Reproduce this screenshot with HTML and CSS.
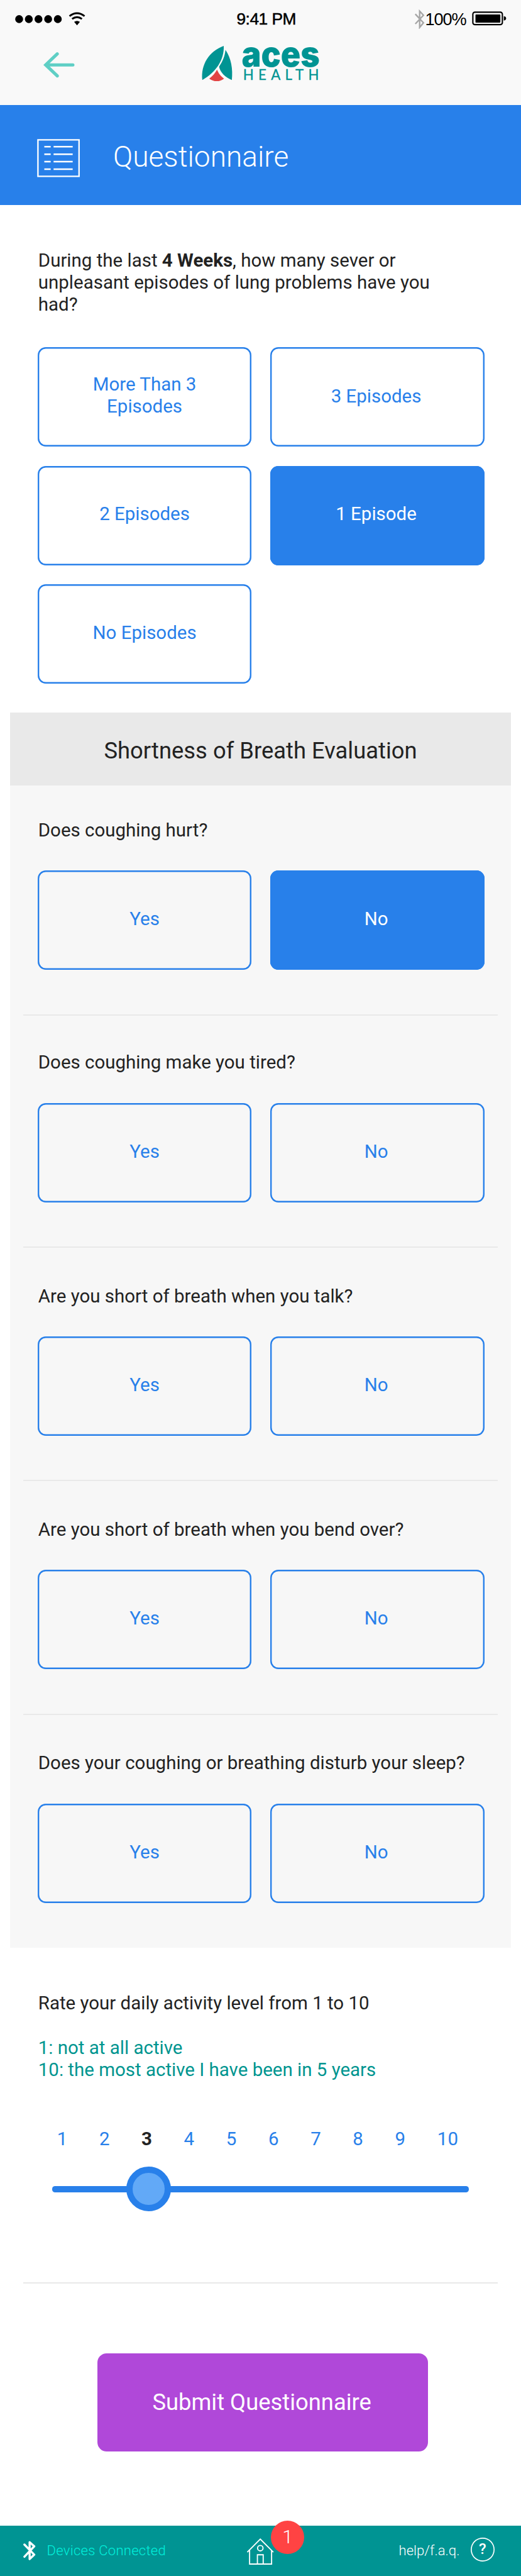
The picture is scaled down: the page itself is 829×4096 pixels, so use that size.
FILE: index.html
```html
<!DOCTYPE html>
<html lang="en">
<head>
<meta charset="utf-8">
<title>Questionnaire</title>
<link rel="stylesheet" href="styles.css">
</head>
<body>
<div class="page">
  <header class="top">
    <div class="status">
      <svg class="signal" viewBox="26 16 124 34"><g><circle cx="33" cy="32.7" r="6.8"/><circle cx="49.7" cy="32.7" r="6.8"/><circle cx="66.4" cy="32.7" r="6.8"/><circle cx="83.1" cy="32.7" r="6.8"/><circle cx="99.8" cy="32.7" r="6.8"/></g><g fill="none" stroke="#000" stroke-width="3.2"><path d="M120 27.5Q133 17.500 146 27.500"/><path d="M124.500 32.500Q133 26 141.500 32.500"/></g><path d="M128 37.500Q133 34 138 37.500L133 43.500Z"/></svg>
      <span class="time">9:41 PM</span>
      <div class="power">
        <svg class="bt-gray" viewBox="0 0 19 34"><path d="M2 8L16 23 9.500 31V3L16 10 2 25" fill="none" stroke="#a6a6a6" stroke-width="2.600"/></svg>
        <span class="percent">100%</span>
        <svg class="battery" viewBox="0 0 60 25"><rect x="1.500" y="1.500" width="51" height="21.500" rx="3.500" fill="none" stroke="#000" stroke-width="2.300"/><rect x="6" y="5.500" width="43" height="14" rx="1"/><path d="M55 8.500Q59 9 59 12.300T55 16Z"/></svg>
      </div>
    </div>
    <div class="brand">
      <svg class="back" viewBox="0 0 56 46"><path d="M51 23H5M24 4L4 23 24 42" fill="none" stroke="#5fcfc5" stroke-width="5.500" stroke-linecap="round" stroke-linejoin="miter"/></svg>
      <svg class="logo" viewBox="348 78 206 64"><path fill="#009493" d="M386 79C361 88 346 111 349 138C373 124 387 103 386 79ZM389 86C399 101 402 119 400 138C389 134 380 125 378 115C384 106 388 97 389 86Z"/><path fill="#e24444" d="M374.500 120C377 127 381 131 386.500 135.500C380 141.500 368 141.500 361 135.500C367 131 371 126 374.500 120Z"/><text class="logo-name" x="417" y="114.500" textLength="135" lengthAdjust="spacingAndGlyphs">aces</text><text class="logo-sub" x="419.500" y="137.500" textLength="131">HEALTH</text></svg>
    </div>
  </header>
  <div class="title-bar">
    <svg class="list-icon" viewBox="0 0 74 66"><g fill="none" stroke="#fff"><path stroke-width="2.500" d="M1.500 1.500H72.500V64.500H1.500Z"/><path stroke-width="2.700" d="M12.500 13.200H23.500M28.500 13.200H61.500M12.500 26.200H23.500M28.500 26.200H61.500M12.500 39.200H23.500M28.500 39.200H61.500M12.500 52.200H23.500M28.500 52.200H61.500"/></g></svg>
    <h1>Questionnaire</h1>
  </div>
  <main>
    <section class="episodes">
      <p class="question">During the last <b>4 Weeks</b>, how many sever or<br>unpleasant episodes of lung problems have you<br>had?</p>
      <div class="options">
        <button class="option">More Than 3<br>Episodes</button><button class="option low">3 Episodes</button>
        <button class="option">2 Episodes</button><button class="option on">1 Episode</button>
        <button class="option">No Episodes</button>
      </div>
    </section>
    <section class="breath">
      <h2>Shortness of Breath Evaluation</h2>
      <div class="item first"><p class="question">Does coughing hurt?</p><div class="options"><button class="option">Yes</button><button class="option on">No</button></div></div>
      <div class="item second"><p class="question">Does coughing make you tired?</p><div class="options"><button class="option">Yes</button><button class="option">No</button></div></div>
      <div class="item"><p class="question">Are you short of breath when you talk?</p><div class="options"><button class="option">Yes</button><button class="option">No</button></div></div>
      <div class="item"><p class="question">Are you short of breath when you bend over?</p><div class="options"><button class="option">Yes</button><button class="option">No</button></div></div>
      <div class="item"><p class="question">Does your coughing or breathing disturb your sleep?</p><div class="options"><button class="option">Yes</button><button class="option">No</button></div></div>
    </section>
    <section class="activity">
      <p class="question">Rate your daily activity level from 1 to 10</p>
      <p class="question legend">1: not at all active<br>10: the most active I have been in 5 years</p>
      <div class="scale"><span>1</span><span>2</span><b>3</b><span>4</span><span>5</span><span>6</span><span>7</span><span>8</span><span>9</span><span class="ten">10</span></div>
      <div class="slider"><div class="track"></div><div class="knob"></div></div>
    </section>
    <div class="submit-row"><button class="submit">Submit Questionnaire</button></div>
  </main>
  <footer class="bottom">
    <div class="devices">
      <svg class="bt" viewBox="0 0 22 34"><path d="M2 6.500L19 24 11 31.500V2.500L19 9.500 2 27.500" fill="none" stroke="#fff" stroke-width="3.700" stroke-linecap="round" stroke-linejoin="round"/></svg>
      <span>Devices Connected</span>
    </div>
    <div class="home">
      <svg class="house" viewBox="0 0 46 46"><g fill="none" stroke="#fff" stroke-width="2"><path d="M0.500 24L23 1.500 45.500 24M4.500 20.500V44.500H42.500V20.500M18 44.500V28.500H28V44.500"/><circle cx="23" cy="17" r="4.700"/></g></svg>
      <span class="badge">1</span>
    </div>
    <div class="help"><span>help/f.a.q.</span><span class="mark">?</span></div>
  </footer>
</div>
</body>
</html>
```
FILE: styles.css
```css
/* 1rem is ten design pixels at the page's display scale */
html { font-size: 9.2122px; }
* { box-sizing: border-box; }
body { margin: 0; background: #fff; color: #222; font-family: Roboto, sans-serif; }
h1, h2, p { margin: 0; font-weight: 400; }
button { font: inherit; border: 0; padding: 0; background: none; }
svg { display: block; flex: none; }
.page { width: 90rem; height: 444.6rem; overflow: hidden; display: flex; flex-direction: column; }

.top { height: 18.1rem; background: #f9f9f9; }
.status { height: 6.6rem; padding: 1.6rem 2.5rem 0 2.6rem; display: grid; grid-template-columns: 1fr auto 1fr; align-items: start; }
.signal { width: 12.4rem; height: 3.4rem; }
.time, .percent { font-family: "Liberation Sans", sans-serif; font-size: 2.95rem; line-height: 3.4rem; color: #000; white-space: nowrap; }
.time { font-size: 2.85rem; letter-spacing: -0.05rem; padding-left: 1.9rem; -webkit-text-stroke: 0.06rem #000; }
.power { display: flex; justify-content: flex-end; }
.bt-gray { width: 1.9rem; height: 3.4rem; }
.percent { letter-spacing: -0.12rem; }
.battery { width: 6rem; height: 2.5rem; margin: 0.4rem 0 0 1rem; }
.brand { display: flex; padding: 1.2rem 0 0 7.5rem; }
.back { width: 5.6rem; height: 4.6rem; margin: 1.1rem 21.7rem 0 0; }
.logo { width: 20.6rem; height: 6.4rem; overflow: visible; }
.logo-name { font: 900 60px Inter, sans-serif; fill: #009493; }
.logo-sub { font: 400 24.200px Lato, sans-serif; fill: #009493; stroke: #009493; stroke-width: 0.3px; }

.title-bar { height: 17.3rem; background: #2880ea; display: flex; align-items: center; padding: 0.1rem 0 0 6.45rem; }
.list-icon { width: 7.4rem; height: 6.6rem; margin-right: 5.7rem; margin-top: 1rem; }
h1 { font-weight: 300; font-size: 5rem; line-height: 6rem; color: #fff; padding-top: 0.7rem; }

.question { font-size: 3.2rem; line-height: 3.8rem; padding-left: 6.6rem; white-space: nowrap; }
.episodes { padding: 7.7rem 0 4.95rem; }
.options { display: grid; grid-template-columns: 36.95rem 36.95rem; gap: 3.35rem 3.25rem; padding-left: 6.5rem; margin-top: 5.4rem; }
.option { height: 17.15rem; border-radius: 1.4rem; box-shadow: inset 0 0 0 0.26rem #2880ea; color: #2880ea; font-size: 3.2rem; line-height: 3.8rem; padding-bottom: 0.4rem; }
.option:nth-child(2n) { padding-right: 0.4rem; }
.option.on { background: #2880ea; color: #fff; }
.option.low { padding-bottom: 0; }

.breath { width: 86.5rem; margin: 0 auto; background: #f7f7f7; height: 213.2rem; }
h2 { height: 12.6rem; padding-top: 0.3rem; background: #e9e9e9; font-size: 3.95rem; line-height: 12.6rem; text-align: center; }
.item { height: 40.32rem; padding: 6.47rem 0 0; margin: 0 2.25rem; border-bottom: 0.26rem solid #e9e9e9; }
.item.first { height: 39.68rem; padding-top: 5.86rem; }
.item.second { height: 40.1rem; padding-top: 6.28rem; }
.item:last-child { border: 0; }
.item .question { padding-left: 2.6rem; }
.item .options { padding-left: 2.5rem; margin-top: 5.04rem; }

.activity { height: 58rem; margin: 0 4rem; padding-top: 7.72rem; border-bottom: 0.26rem solid #e9e9e9; }
.activity .question { padding-left: 2.6rem; }
.activity .legend { margin-top: 3.85rem; color: #009590; }
.scale { display: flex; margin: 8.2rem 0 0 3.1rem; font-size: 3.2rem; line-height: 3.8rem; color: #2880ea; }
.scale > * { width: 7.3rem; text-align: center; }
.scale .ten { width: 9.1rem; }
.scale b { color: #222; }
.slider { position: relative; height: 7.8rem; margin: 2.8rem 5rem 0; display: flex; align-items: center; }
.track { width: 100%; height: 1.05rem; border-radius: 0.5rem; background: #2880ea; }
.knob { position: absolute; left: 12.8rem; top: 0; width: 7.75rem; height: 7.75rem; border-radius: 50%; background: #62a9f7; border: 1.17rem solid #2880ea; }

.submit-row { padding: 12rem 0 0 16.8rem; }
.submit { width: 57.15rem; height: 17rem; border-radius: 1.6rem; background: #b048d9; color: #fff; font-size: 3.95rem; padding: 0 0.3rem 0.2rem 0; }

.bottom { height: 8.67rem; margin-top: auto; background: #009493; color: #fff; display: flex; justify-content: space-between; font-weight: 300; font-size: 2.4rem; line-height: 3rem; padding: 0 4.6rem 0 4rem; }
.devices { display: flex; width: 38.7rem; color: #00f0dc; padding-top: 2.65rem; gap: 1.9rem; letter-spacing: 0.025rem; }
.bt { width: 2.2rem; height: 3.4rem; }
.devices span { padding-top: 0.2rem; }
.home { position: relative; width: 4.6rem; padding-top: 2.15rem; }
.house { width: 4.6rem; height: 4.6rem; }
.badge { position: absolute; left: 4.1rem; top: -0.85rem; width: 5.75rem; height: 5.75rem; border-radius: 50%; background: #ff4343; font-size: 3.3rem; line-height: 5.6rem; text-align: center; }
.help { display: flex; width: 38.1rem; justify-content: flex-end; padding-top: 2.1rem; gap: 1.9rem; }
.help span:first-child { padding-top: 0.75rem; }
.mark { width: 4.1rem; height: 4.1rem; border-radius: 50%; box-shadow: inset 0 0 0 0.18rem #fff; font-weight: 500; font-size: 2.6rem; line-height: 4.1rem; text-align: center; }
```
